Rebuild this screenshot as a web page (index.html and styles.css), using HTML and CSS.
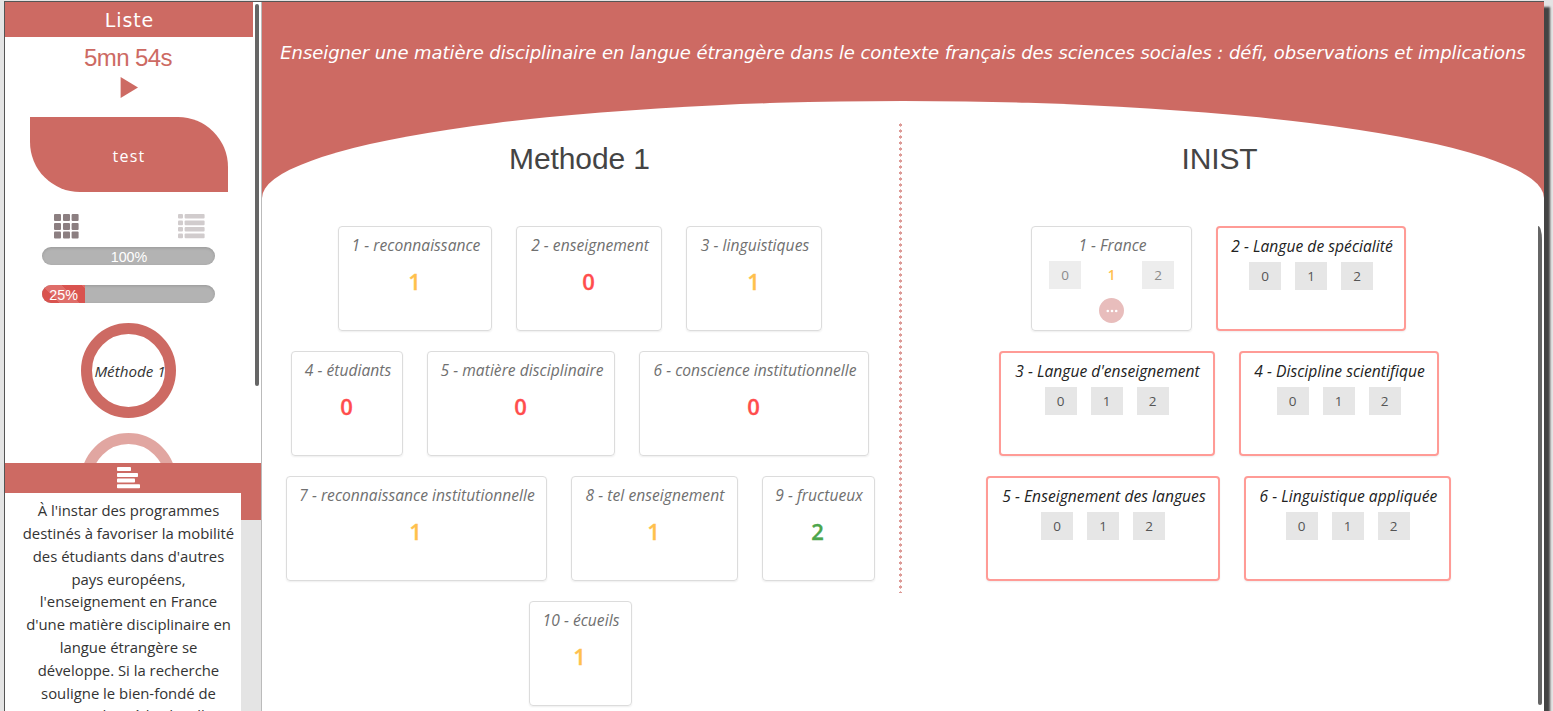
FILE: index.html
```html
<!DOCTYPE html>
<html lang="fr">
<head>
<meta charset="utf-8">
<title>Liste</title>
<link rel="stylesheet" href="styles.css">
</head>
<body>
<div class="app">
  <aside class="side">
    <div class="side-top">
      <div class="side-list">
        <h1 class="side-title"><span>Liste</span></h1>
        <div class="timer"><span>5mn 54s</span></div>
        <svg class="play" width="18" height="22" viewBox="0 0 18 22"><path d="M.6 0 18 10.5 .6 21z" fill="#cd6a63"/></svg>
        <div class="leaf"><span>test</span></div>
        <div class="views">
          <svg width="25" height="25" viewBox="0 0 25 25" fill="#8c7f81"><rect x="0" y="0" width="7" height="7" rx="1"/><rect x="9" y="0" width="7" height="7" rx="1"/><rect x="17.6" y="0" width="7" height="7" rx="1"/><rect x="0" y="9" width="7" height="7" rx="1"/><rect x="9" y="9" width="7" height="7" rx="1"/><rect x="17.6" y="9" width="7" height="7" rx="1"/><rect x="0" y="17.4" width="7" height="7" rx="1"/><rect x="9" y="17.4" width="7" height="7" rx="1"/><rect x="17.6" y="17.4" width="7" height="7" rx="1"/></svg>
          <svg width="27" height="25" viewBox="0 0 27 25" fill="#d1cccd"><rect y="0" width="5" height="4.6" rx="1"/><rect x="6.6" y="0" width="20" height="4.6" rx="1"/><rect y="6.6" width="5" height="4.6" rx="1"/><rect x="6.6" y="6.6" width="20" height="4.6" rx="1"/><rect y="13" width="5" height="4.6" rx="1"/><rect x="6.6" y="13" width="20" height="4.6" rx="1"/><rect y="19.6" width="5" height="4.6" rx="1"/><rect x="6.6" y="19.6" width="20" height="4.6" rx="1"/></svg>
        </div>
        <div class="bar"><span>100%</span></div>
        <div class="bar"><div class="fill" style="width:25%"><span>25%</span></div></div>
        <div class="ring"><span>Méthode 1</span></div>
        <div class="ring faded"></div>
      </div>
      <div class="side-scroll"></div>
    </div>
    <div class="abstract-head">
      <svg width="24" height="22" viewBox="0 0 24 22" fill="#fff"><rect y="0" width="14" height="4" rx=".8"/><rect y="6" width="21" height="4" rx=".8"/><rect y="11.6" width="18" height="4" rx=".8"/><rect y="17.2" width="23" height="4" rx=".8"/></svg>
    </div>
    <div class="abstract">
      <p class="abstract-text">À l'instar des programmes<br>destinés à favoriser la mobilité<br>des étudiants dans d'autres<br>pays européens,<br>l'enseignement en France<br>d'une matière disciplinaire en<br>langue étrangère se<br>développe. Si la recherche<br>souligne le bien-fondé de<span class="last-line">ce type de méthode, elle</span></p>
      <div class="abstract-scroll"></div>
    </div>
  </aside>
  <main class="main">
    <header class="doc-title"><span>Enseigner une matière disciplinaire en langue étrangère dans le contexte français des sciences sociales : défi, observations et implications</span></header>
    <div class="sheet">
      <section class="col left">
        <h2><span>Methode 1</span></h2>
        <div class="row">
          <article class="card w154"><em>1 - reconnaissance</em><b class="s1">1</b></article>
          <article class="card w146"><em>2 - enseignement</em><b class="s0">0</b></article>
          <article class="card w136"><em>3 - linguistiques</em><b class="s1">1</b></article>
        </div>
        <div class="row">
          <article class="card w112"><em>4 - étudiants</em><b class="s0">0</b></article>
          <article class="card w188"><em>5 - matière disciplinaire</em><b class="s0">0</b></article>
          <article class="card w230"><em>6 - conscience institutionnelle</em><b class="s0">0</b></article>
        </div>
        <div class="row">
          <article class="card w261"><em>7 - reconnaissance institutionnelle</em><b class="s1">1</b></article>
          <article class="card w167"><em>8 - tel enseignement</em><b class="s1">1</b></article>
          <article class="card w113"><em>9 - fructueux</em><b class="s2">2</b></article>
        </div>
        <div class="row">
          <article class="card w103"><em>10 - écueils</em><b class="s1">1</b></article>
        </div>
      </section>
      <div class="divider"></div>
      <section class="col right">
        <h2><span>INIST</span></h2>
        <div class="row">
          <article class="card rated w161"><em>1 - France</em><div class="marks"><i>0</i><i class="chosen">1</i><i>2</i></div>
            <div class="more"><svg width="12" height="4" viewBox="0 0 12 4" fill="#fff"><circle cx="1.8" cy="2" r="1.3"/><circle cx="6" cy="2" r="1.3"/><circle cx="10.2" cy="2" r="1.3"/></svg></div></article>
          <article class="card todo w190"><em>2 - Langue de spécialité</em><div class="marks"><i>0</i><i>1</i><i>2</i></div></article>
        </div>
        <div class="row">
          <article class="card todo w216"><em>3 - Langue d'enseignement</em><div class="marks"><i>0</i><i>1</i><i>2</i></div></article>
          <article class="card todo w200"><em>4 - Discipline scientifique</em><div class="marks"><i>0</i><i>1</i><i>2</i></div></article>
        </div>
        <div class="row">
          <article class="card todo w234"><em>5 - Enseignement des langues</em><div class="marks"><i>0</i><i>1</i><i>2</i></div></article>
          <article class="card todo w207"><em>6 - Linguistique appliquée</em><div class="marks"><i>0</i><i>1</i><i>2</i></div></article>
        </div>
      </section>
      <div class="main-scroll"></div>
    </div>
  </main>
</div>
</body>
</html>
```
FILE: styles.css
```css
* { box-sizing: border-box; }
body { margin: 0; height: 711px; overflow: hidden; background: #e4e4e4; padding: 1px 0 0 4px; font-family: "Open Sans", "Noto Sans", sans-serif; }
.app { display: flex; width: 1540px; height: 740px; border: 1px solid #555; border-width: 1px 0 0 1px; box-shadow: 6px 6px 2px #444; background: #fff; }

.side { width: 257px; flex: none; border-right: 1px solid #bbb; display: flex; flex-direction: column; }
.side-top { display: flex; height: 461px; overflow: hidden; }
.side-list { width: 248px; display: flex; flex-direction: column; align-items: center; }
.side-title { margin: 0; width: 100%; height: 35px; flex: none; background: #cd6a63; color: #fff; font: 19px/36px "DejaVu Sans", sans-serif; letter-spacing: .9px; text-align: center; padding-left: 1px; }
.timer { height: 40px; flex: none; color: #cd6a63; font: 24px/42px "Liberation Sans", sans-serif; letter-spacing: -.6px; margin-right: 2px; }
.play { flex: none; }
.leaf { width: 198px; height: 75px; flex: none; margin: 18px 0 22px; background: #cd6a63; border-radius: 0 50px 0 50px; color: #fff; font-size: 16px; line-height: 78px; letter-spacing: 1.2px; text-align: center; }
.views { display: flex; justify-content: space-between; width: 151px; height: 33px; flex: none; }
.bar { width: 173px; height: 18px; flex: none; margin: 0 1px 20px 0; border-radius: 9px; overflow: hidden; background: #b3b3b3; box-shadow: inset 0 1px 3px rgba(0,0,0,.15); color: #fff; font: 14.3px/20px "Liberation Sans", sans-serif; text-align: center; padding-left: 1px; }
.bar:has(.fill) { padding-left: 0; }
.fill { height: 100%; background: linear-gradient(45deg, rgba(255,255,255,.15) 25%, transparent 25%, transparent 50%, rgba(255,255,255,.15) 50%, rgba(255,255,255,.15) 75%, transparent 75%) 0 0 / 40px 40px #d9534f; }
.ring { width: 95px; height: 95px; flex: none; border: 11px solid #cd6a63; border-radius: 50%; margin: 0 1px 15px 0; font-size: 15.2px; font-style: italic; line-height: 74px; color: #333; white-space: nowrap; display: flex; justify-content: center; }
.ring span { margin-left: 3px; }
.faded { opacity: .6; }
.side-scroll { width: 4px; height: 382px; margin: 2px 0 0 2px; border-radius: 2px; background: #666; }
.abstract-head { height: 30px; flex: none; background: #cd6a63; display: flex; justify-content: center; padding: 4px 9px 0 0; }
.abstract { display: flex; flex: 1; min-height: 0; background: #e4e4e4; }
.abstract-text { margin: 0; width: 236px; height: 246px; overflow: hidden; background: #fff; color: #333; font-size: 14.87px; line-height: 22.86px; padding: 6px 0 0 11px; text-align: center; white-space: nowrap; }
.last-line { display: block; margin-top: -1px; }
.abstract-scroll { width: 20px; height: 27px; background: #cd6a63; }

.main { flex: 1; height: 709px; background: linear-gradient(#cd6a63 200px, #fff 200px); display: flex; flex-direction: column; }
.doc-title { height: 99px; flex: none; color: #fff; font: italic 18px/101px "DejaVu Sans", sans-serif; letter-spacing: -.08px; text-align: center; white-space: nowrap; }
.sheet { flex: 1; display: flex; background: #fff; border-radius: 50% 50% 0 0 / 97px 97px 0 0; padding-top: 22px; }
.col { display: flex; flex-direction: column; }
.left { width: 637px; padding-right: 1px; }
.right { width: 634px; padding-right: 1px; }
.divider { width: 3px; height: 470px; background: radial-gradient(circle, #dd9a96 1.4px, transparent 1.8px) 0 -1px / 3px 6px; }
.main-scroll { width: 4px; height: 479px; margin: 103px 0 0 2px; background: #666; border-radius: 0 4px 2px 2px / 0 14px 2px 2px; }
h2 { margin: 0; height: 103px; font: 30px/71px "Liberation Sans", sans-serif; letter-spacing: -.1px; color: #444; text-align: center; }
.left h2 { padding-right: 1px; }
.right h2 { padding-left: 2px; }
.row { display: flex; justify-content: center; gap: 24px; margin-bottom: 20px; }
.card { height: 105px; border: 1px solid #dcdcdc; border-radius: 4px; box-shadow: 0 1px 2px rgba(0,0,0,.07); display: flex; flex-direction: column; align-items: center; color: #707070; }
.card em { font-size: 15.6px; letter-spacing: .04px; line-height: 20px; margin-top: 8px; padding-left: 2px; white-space: nowrap; }
.card b { font-size: 22px; font-weight: 600; -webkit-text-stroke: .3px; line-height: 30px; margin-top: 11px; padding-right: 1px; }
.s0 { color: #ff4d4d; }
.s1 { color: #ffc04d; }
.s2 { color: #4ca64c; }
.todo { border: 2px solid #ff9b96; color: #222; }
.marks { display: flex; gap: 14px; margin-top: 6px; }
.marks i { width: 32px; height: 28px; background: #e6e6e6; color: #555; font-style: normal; font-size: 13.5px; line-height: 29px; text-align: center; }
.rated .marks i { background: #ededed; color: #8b8b8b; }
.rated .marks { gap: 14.5px; }
.rated .marks i.chosen { background: none; color: #ffc04d; font-weight: 600; }
.more { width: 25px; height: 25px; margin-top: 9px; border-radius: 50%; background: #e8bdbc; display: flex; align-items: center; justify-content: center; }
.w103 { width: 103px; } .w112 { width: 112px; } .w113 { width: 113px; } .w136 { width: 136px; }
.w146 { width: 146px; } .w154 { width: 154px; } .w161 { width: 161px; } .w167 { width: 167px; }
.w188 { width: 188px; } .w190 { width: 190px; } .w200 { width: 200px; } .w207 { width: 207px; }
.w216 { width: 216px; } .w230 { width: 230px; } .w234 { width: 234px; } .w261 { width: 261px; }
```
